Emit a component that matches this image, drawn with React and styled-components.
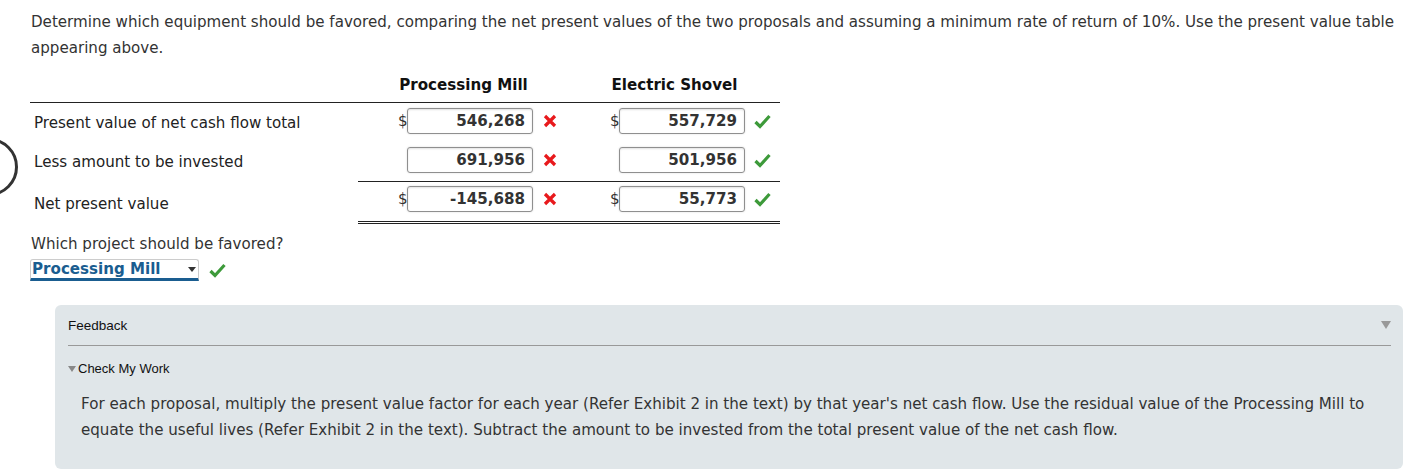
import styled, { createGlobalStyle } from "styled-components"

const Global = createGlobalStyle`
  html, body { margin: 0; padding: 0; background: #fff; }
  body { font-family: Verdana, "DejaVu Sans", sans-serif; color: #333; }
`

const Page = styled.div`
  position: relative;
  padding: 9px 10px 0 31px;
  overflow: hidden;
  height: 476px;
  box-sizing: border-box;
`

const Ring = styled.div`
  position: absolute;
  left: -40px;
  top: 138px;
  width: 52px;
  height: 52px;
  border: 3px solid #333;
  border-radius: 50%;
`

const Intro = styled.p`
  margin: 0;
  font-size: 15.1px;
  line-height: 26px;
`

const Table = styled.div`
  margin-top: 7px;
  display: grid;
  grid-template-columns: 328px 211px 211px;
  width: 750px;
  margin-left: -1px;
`

const Head = styled.div`
  height: 35px;
  box-sizing: border-box;
  display: flex;
  align-items: center;
  justify-content: center;
  font-weight: bold;
  font-size: 15.1px;
  color: #111;
  border-bottom: 1px solid #222;
`

const Label = styled.div`
  height: ${p => (p.$low ? "43px" : "39px")};
  display: flex;
  align-items: center;
  padding: ${p => (p.$low ? "2px" : "0")} 4px 0;
  box-sizing: border-box;
  font-size: 15.1px;
  color: #222;
`

const Cell = styled.div`
  height: ${p => (p.$total ? "43px" : "39px")};
  box-sizing: border-box;
  display: flex;
  align-items: flex-start;
  padding-top: ${p => (p.$total ? "4px" : "5px")};
  padding-left: ${p => (p.$right ? "41px" : "40px")};
  ${p => p.$total && "border-top: 1px solid #222; border-bottom: 3px double #222;"}
`

const Dollar = styled.span`
  width: 9px;
  height: 26px;
  line-height: 26px;
  font-size: 15.1px;
  color: #333;
`

const Box = styled.div`
  width: 126px;
  height: 26px;
  box-sizing: border-box;
  border: 1px solid #8f8f8f;
  border-radius: 3px;
  box-shadow: inset 0 1px 2px rgba(0, 0, 0, 0.12), 0 0 2px rgba(0, 0, 0, 0.15);
  display: flex;
  align-items: center;
  justify-content: flex-end;
  padding-right: 7px;
  font-weight: bold;
  font-size: 15.1px;
  color: #333;
  margin-left: ${p => (p.$nodollar ? "9px" : "0")};
`

const Mark = styled.span`
  margin-left: ${p => p.$gap}px;
  height: 26px;
  display: flex;
  align-items: center;
`

const Question = styled.div`
  margin-top: 10px;
  font-size: 15.1px;
  line-height: 20px;
  color: #333;
`

const SelectRow = styled.div`
  display: flex;
  align-items: center;
  gap: 10px;
  margin-top: 5px;
  margin-left: -1px;
`

const Select = styled.div`
  width: 169px;
  height: 22px;
  box-sizing: border-box;
  border: 1px solid #ccc;
  border-bottom: 3px solid #1a5d90;
  border-radius: 3px 3px 0 0;
  display: flex;
  align-items: center;
  justify-content: space-between;
  padding: 0 0 0 1px;
  font-weight: bold;
  font-size: 15.1px;
  color: #1a5d90;
  line-height: 16px;
`

const Caret = styled.span`
  width: 0;
  height: 0;
  border-left: 4px solid transparent;
  border-right: 4px solid transparent;
  border-top: 5px solid #333;
  margin-right: 2px;
`

const Panel = styled.div`
  margin: 24px 0 0 24px;
  width: 1348px;
  height: 164px;
  box-sizing: border-box;
  background: #e0e6e9;
  border-radius: 6px;
  padding: 0 12px 0 13px;
  font-family: Arial, "Liberation Sans", sans-serif;
`

const PanelHead = styled.div`
  height: 40px;
  display: flex;
  align-items: center;
  justify-content: space-between;
  font-size: 13.5px;
  color: #111;
  border-bottom: 1px solid #999;
`

const DownTri = styled.span`
  width: 0;
  height: 0;
  border-left: ${p => p.$s}px solid transparent;
  border-right: ${p => p.$s}px solid transparent;
  border-top: ${p => p.$s * 1.6}px solid ${p => p.$c};
  display: inline-block;
`

const CheckHead = styled.div`
  margin-top: 15px;
  display: flex;
  align-items: center;
  gap: 2px;
  font-size: 13px;
  color: #111;
`

const FeedText = styled.p`
  margin: 15px 0 0 13px;
  font-family: Verdana, "DejaVu Sans", sans-serif;
  font-size: 15.1px;
  line-height: 26px;
  color: #333;
`

const Cross = () => (
  <svg width="14" height="14" viewBox="0 0 14 14">
    <path d="M2 2 L12 12 M12 2 L2 12" stroke="#e8191c" strokeWidth="3.2" strokeLinecap="butt" />
  </svg>
)

const Tick = () => (
  <svg width="17" height="15" viewBox="0 0 17 15">
    <path d="M1.5 8 L6 12.5 L15.5 2" fill="none" stroke="#3d9a3a" strokeWidth="3.2" />
  </svg>
)

const rows = [
  { label: "Present value of net cash flow total", pm: "546,268", es: "557,729", dollar: true },
  { label: "Less amount to be invested", pm: "691,956", es: "501,956", dollar: false },
  { label: "Net present value", pm: "-145,688", es: "55,773", dollar: true, total: true },
]

export default function App() {
  return (
    <>
      <Global />
      <Page>
        <Ring />
        <Intro>
          Determine which equipment should be favored, comparing the net present values of the two proposals and
          assuming a minimum rate of return of 10%. Use the present value table appearing above.
        </Intro>
        <Table>
          <Head />
          <Head>Processing Mill</Head>
          <Head>Electric Shovel</Head>
          {rows.map(r => (
            <>
              <Label key={r.label + "l"} $low={r.total}>{r.label}</Label>
              <Cell key={r.label + "p"} $total={r.total}>
                {r.dollar && <Dollar>$</Dollar>}
                <Box $nodollar={!r.dollar}>{r.pm}</Box>
                <Mark $gap={10}><Cross /></Mark>
              </Cell>
              <Cell key={r.label + "e"} $right $total={r.total}>
                {r.dollar && <Dollar>$</Dollar>}
                <Box $nodollar={!r.dollar}>{r.es}</Box>
                <Mark $gap={9}><Tick /></Mark>
              </Cell>
            </>
          ))}
        </Table>
        <Question>Which project should be favored?</Question>
        <SelectRow>
          <Select>
            Processing Mill
            <Caret />
          </Select>
          <Tick />
        </SelectRow>
        <Panel>
          <PanelHead>
            Feedback
            <DownTri $s={5} $c="#999" />
          </PanelHead>
          <CheckHead>
            <DownTri $s={4} $c="#888" />
            Check My Work
          </CheckHead>
          <FeedText>
            For each proposal, multiply the present value factor for each year (Refer Exhibit 2 in the text) by that
            year's net cash flow. Use the residual value of the Processing Mill to equate the useful lives (Refer
            Exhibit 2 in the text). Subtract the amount to be invested from the total present value of the net cash
            flow.
          </FeedText>
        </Panel>
      </Page>
    </>
  )
}
